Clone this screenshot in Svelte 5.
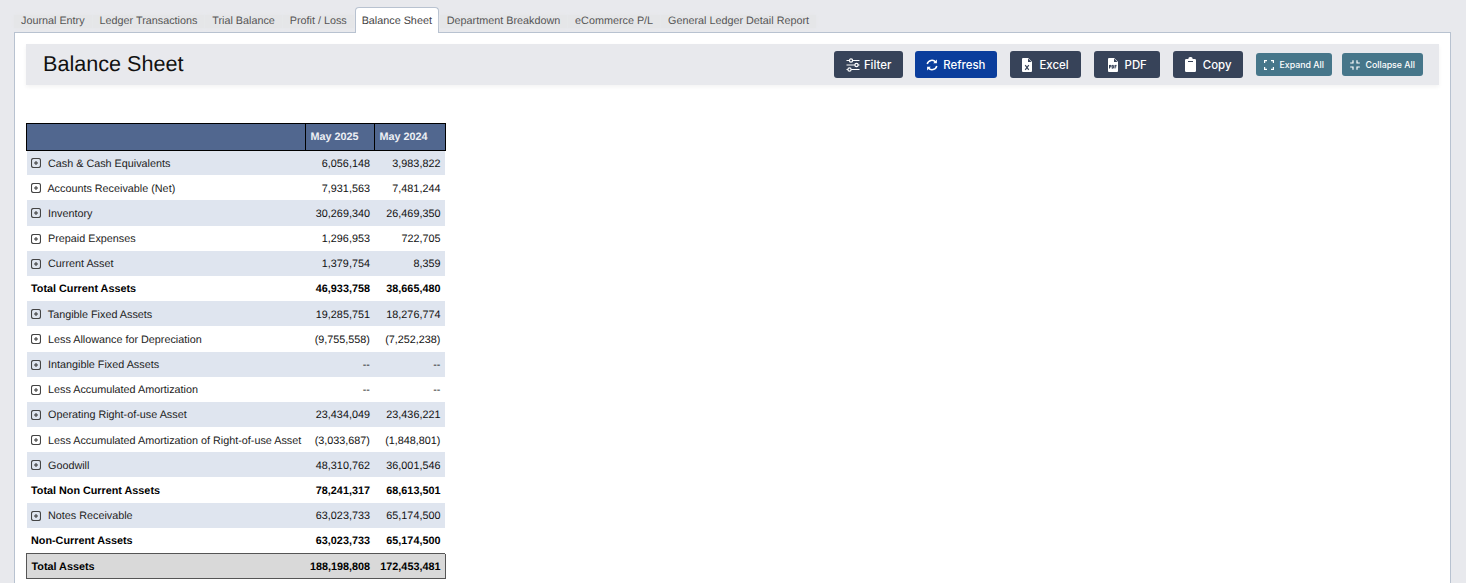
<script lang="ts">
	const tabs = ['Journal Entry', 'Ledger Transactions', 'Trial Balance', 'Profit / Loss', 'Balance Sheet', 'Department Breakdown', 'eCommerce P/L', 'General Ledger Detail Report'];
	const active = 'Balance Sheet';

	// total = bold subtotal without the expand icon
	const rows = [
		{ label: 'Cash & Cash Equivalents', a: '6,056,148', b: '3,983,822' },
		{ label: 'Accounts Receivable (Net)', a: '7,931,563', b: '7,481,244' },
		{ label: 'Inventory', a: '30,269,340', b: '26,469,350' },
		{ label: 'Prepaid Expenses', a: '1,296,953', b: '722,705' },
		{ label: 'Current Asset', a: '1,379,754', b: '8,359' },
		{ label: 'Total Current Assets', a: '46,933,758', b: '38,665,480', total: true },
		{ label: 'Tangible Fixed Assets', a: '19,285,751', b: '18,276,774' },
		{ label: 'Less Allowance for Depreciation', a: '(9,755,558)', b: '(7,252,238)' },
		{ label: 'Intangible Fixed Assets', a: '--', b: '--' },
		{ label: 'Less Accumulated Amortization', a: '--', b: '--' },
		{ label: 'Operating Right-of-use Asset', a: '23,434,049', b: '23,436,221' },
		{ label: 'Less Accumulated Amortization of Right-of-use Asset', a: '(3,033,687)', b: '(1,848,801)' },
		{ label: 'Goodwill', a: '48,310,762', b: '36,001,546' },
		{ label: 'Total Non Current Assets', a: '78,241,317', b: '68,613,501', total: true },
		{ label: 'Notes Receivable', a: '63,023,733', b: '65,174,500' },
		{ label: 'Non-Current Assets', a: '63,023,733', b: '65,174,500', total: true }
	];
</script>

<div class="page">
	<nav class="tabs">
		{#each tabs as tab}
			<button class="tab" class:active={tab === active}><span>{tab}</span></button>
		{/each}
	</nav>

	<section class="panel">
		<header class="head">
			<h1>Balance Sheet</h1>
			<div class="actions">
				<button class="btn filter">
					<svg width="14" height="14" viewBox="0 0 14 14" fill="none" stroke="currentColor" stroke-width="1.2"><path d="M0.5 2.5H13.5M0.5 7H13.5M0.5 11.5H13.5"/><circle cx="5" cy="2.5" r="1.6" fill="#374359"/><circle cx="10.5" cy="7" r="1.6" fill="#374359"/><circle cx="3.5" cy="11.5" r="1.6" fill="#374359"/></svg>
					Filter
				</button>
				<button class="btn primary">
					<svg width="12" height="12" viewBox="0 0 12 12" fill="none" stroke="currentColor" stroke-width="1.5"><path d="M1.2 5A4.9 4.9 0 0 1 9.8 3.2M10.8 7A4.9 4.9 0 0 1 2.2 8.8"/><path d="M10.9 0.6V4.3H7.2Z M1.1 11.4V7.7H4.8Z" fill="currentColor" stroke="none"/></svg>
					Refresh
				</button>
				<button class="btn wide">
					<svg width="10" height="14" viewBox="0 0 10 14"><path fill="currentColor" d="M1 0H6.2L10 3.8V13a1 1 0 0 1-1 1H1a1 1 0 0 1-1-1V1a1 1 0 0 1 1-1Z"/><path fill="#374359" d="M6 0.4V4H9.6Z"/><path stroke="#374359" stroke-width="1.2" d="M3.2 7.2L6.8 11.8M6.8 7.2L3.2 11.8"/></svg>
					Excel
				</button>
				<button class="btn wide pdf">
					<svg width="10" height="14" viewBox="0 0 10 14"><path fill="currentColor" d="M1 0H6.2L10 3.8V13a1 1 0 0 1-1 1H1a1 1 0 0 1-1-1V1a1 1 0 0 1 1-1Z"/><path fill="#374359" d="M6 0.4V4H9.6Z"/><path stroke="#374359" stroke-width="1" d="M1.5 7V10.5M1.5 7.4H3V8.8H1.5M4.2 7V10.5M4.2 7.4H5.4V10.1H4.2M7 7V10.5M7 7.4H8.6M7 8.8H8.3" fill="none"/></svg>
					PDF
				</button>
				<button class="btn wide copy">
					<svg width="11" height="15" viewBox="0 0 11 15"><path fill="currentColor" d="M1.2 2H3.4V1.6A1.6 1.6 0 0 1 5 0H6A1.6 1.6 0 0 1 7.6 1.6V2H9.8A1.2 1.2 0 0 1 11 3.2V13.8A1.2 1.2 0 0 1 9.8 15H1.2A1.2 1.2 0 0 1 0 13.8V3.2A1.2 1.2 0 0 1 1.2 2Z"/><path stroke="#374359" d="M3 4.5H8"/></svg>
					Copy
				</button>
				<button class="btn small expand">
					<svg width="10" height="10" viewBox="0 0 10 10" fill="none" stroke="currentColor" stroke-width="1.2"><path d="M0.6 3V0.6H3M7 0.6H9.4V3M9.4 7V9.4H7M3 9.4H0.6V7"/></svg>
					Expand All
				</button>
				<button class="btn small">
					<svg width="10" height="10" viewBox="0 0 10 10" fill="none" stroke="currentColor" stroke-width="1.2"><path d="M0.2 3H3V0.2M7 0.2V3H9.8M9.8 7H7V9.8M3 9.8V7H0.2"/></svg>
					Collapse All
				</button>
			</div>
		</header>

		<table>
			<colgroup>
				<col class="c-label" />
				<col class="c-a" />
				<col class="c-b" />
			</colgroup>
			<thead>
				<tr>
					<th></th>
					<th>May 2025</th>
					<th>May 2024</th>
				</tr>
			</thead>
			<tbody>
				{#each rows as row}
					<tr class:total={row.total}>
						<td class="label">
							{#if !row.total}
								<svg class="plus" width="10" height="10" viewBox="0 0 10 10"><rect x="0.5" y="0.5" width="9" height="9" rx="2" fill="none" stroke="#444" stroke-width="1.1"/><path d="M3 5H7M5 3V7" stroke="#333"/></svg>
							{/if}
							{row.label}
						</td>
						<td>{row.a}</td>
						<td>{row.b}</td>
					</tr>
				{/each}
				<tr class="grand">
					<td class="label">Total Assets</td>
					<td>188,198,808</td>
					<td>172,453,481</td>
				</tr>
			</tbody>
		</table>
	</section>
</div>

<style>
	:global(body) {
		margin: 0;
		background: #e8e9ed;
		font-family: 'Liberation Sans', Arial, sans-serif;
		text-rendering: geometricPrecision;
		overflow: hidden;
	}

	.page {
		height: 583px;
		padding: 7px 15px 0 14px;
		box-sizing: border-box;
		overflow: hidden;
	}

	.tabs {
		display: flex;
		gap: 0.9px;
		height: 26px;
		position: relative;
		z-index: 1;
		margin-bottom: -1px;
	}

	.tab {
		font: 10.8px 'Liberation Sans', Arial, sans-serif;
		text-rendering: geometricPrecision;
		color: #555;
		background: none;
		border: 0;
		padding: 2px 7px 0;
		height: 26px;
	}

	.tab span {
		display: block;
		margin: 0 -7px;
		padding: 0 7px;
		line-height: 13px;
		background: #e5e6e8;
		box-shadow: 0 0 3px #e5e6e8;
	}

	.tab.active {
		background: #fff;
		border: 1px solid #b8c2d0;
		border-bottom: 0;
		border-radius: 4px 4px 0 0;
		color: #444;
		padding: 1px 6px 0;
	}

	.tab.active span {
		background: none;
		box-shadow: none;
		margin: 0;
		padding: 0;
	}

	.panel {
		background: #fff;
		border: 1px solid #b8c2d0;
		height: 600px;
		padding: 11px 11px 0;
		box-sizing: border-box;
	}

	.head {
		display: flex;
		align-items: center;
		justify-content: space-between;
		height: 41px;
		padding: 0 16px 2px 17px;
		box-sizing: border-box;
		background: #e8e9ed;
		box-shadow: 0 2px 4px rgba(0, 0, 0, 0.05);
	}

	h1 {
		margin: 0;
		font-size: 21.6px;
		font-weight: 400;
		color: #111;
	}

	.actions {
		display: flex;
		align-items: center;
		gap: 13px;
		margin-top: 2px;
	}

	.btn {
		display: flex;
		align-items: center;
		gap: 5px;
		height: 27px;
		padding: 0 11.5px;
		background: #374359;
		color: #fff;
		border: 0;
		border-radius: 3px;
		font: 500 11.4px Inter, 'Liberation Sans', sans-serif;
	}

	.btn.filter {
		gap: 4px;
		padding: 0 11.5px;
		margin-right: -1px;
	}

	.btn.primary {
		background: #0a3d9c;
	}

	.btn.wide {
		gap: 7px;
		padding: 0 12.5px;
	}

	.btn.pdf {
		padding: 0 13.5px;
	}

	.btn.copy {
		padding: 0 11.5px;
	}

	.btn.small {
		height: 23px;
		padding: 0 8px;
		gap: 5px;
		background: #46768a;
		font-size: 8.8px;
	}

	.btn.small.expand {
		padding: 0 8.5px;
	}

	.btn.small + .btn.small {
		margin-left: -3px;
	}

	table {
		margin-top: 38px;
		width: 420px;
		border-collapse: collapse;
		table-layout: fixed;
		font-size: 10.8px;
		color: #111;
	}

	.c-label {
		width: 279px;
	}

	.c-a {
		width: 69px;
	}

	th {
		height: 25.5px;
		background: #51678f;
		color: #edf0f5;
		border: 1px solid #000;
		text-align: left;
		padding: 0 4.5px;
		font-size: 10.8px;
	}

	td {
		height: 25.2px;
		box-sizing: border-box;
		padding: 1.9px 4.6px 0 4.5px;
		text-align: right;
		white-space: nowrap;
	}

	td:last-child {
		border-right: 1px solid #fff;
	}

	td.label {
		text-align: left;
		color: #222;
	}

	.plus {
		vertical-align: -1.5px;
		margin-right: 4px;
	}

	tbody tr:nth-child(odd) td {
		background: #dfe5ef;
	}

	tbody tr.total td {
		font-weight: 700;
		color: #000;
		background: #fff;
	}

	tbody tr.grand td {
		background: #d9d9d9;
		font-weight: 700;
		color: #000;
		border-top: 1px solid #555;
		border-bottom: 1px solid #555;
	}

	tbody tr.grand td:first-child {
		border-left: 1px solid #555;
	}

	tbody tr.grand td:last-child {
		border-right: 1px solid #555;
	}
</style>
